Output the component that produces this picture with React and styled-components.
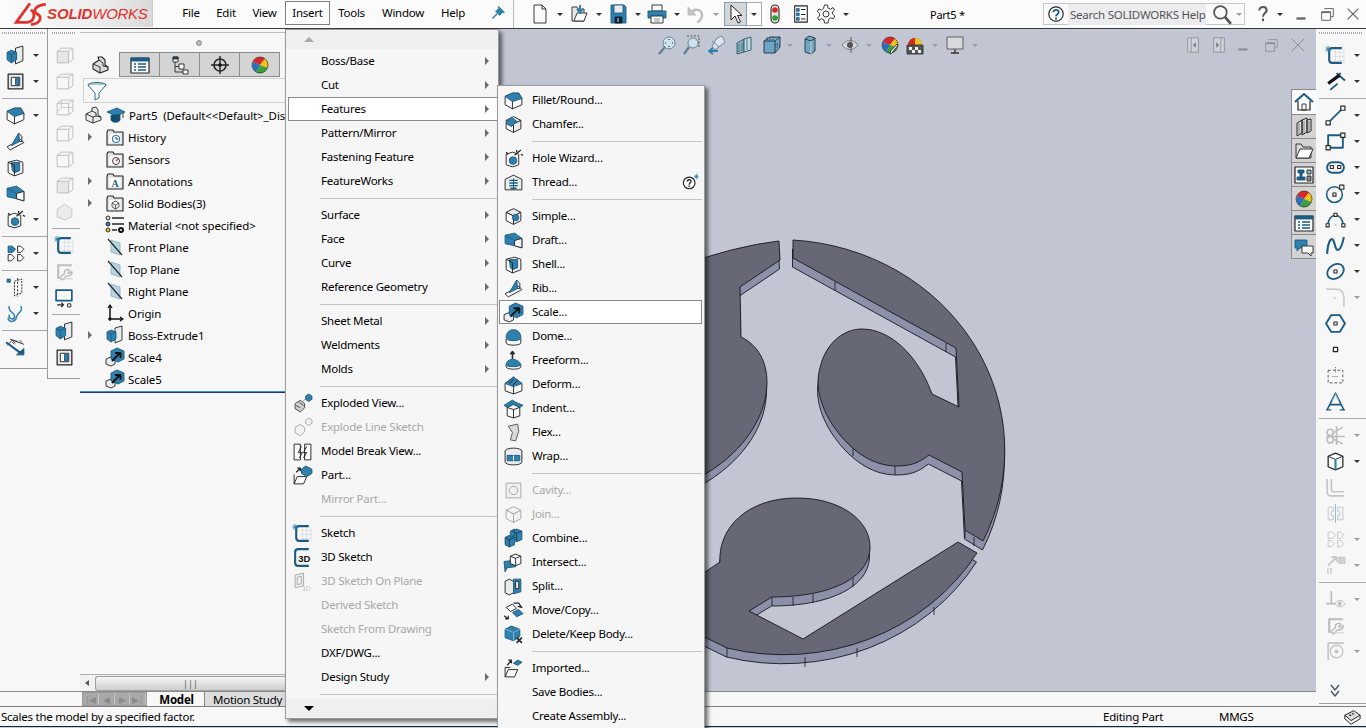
import React from 'react'
import styled, { createGlobalStyle } from 'styled-components'

const B = '#2f80ad'
const D = '#1c5c84'
const L = '#e9ebec'
const W = '#fbfbfb'
const K = '#262626'

const GlobalStyle = createGlobalStyle`
  html, body { margin: 0; padding: 0; background: #f7f7f7; overflow: hidden; }
  body { font-family: 'Noto Sans', 'Open Sans', sans-serif; font-size: 11.5px; letter-spacing: -0.25px; color: #000; }
`

const Box = ({ t = L, l = W, r = L }) => (
  <>
    <path d="M3 6 10 2.5 17 6 10 9.5Z" fill={t} />
    <path d="M3 6 10 9.5V17.5L3 14Z" fill={l} />
    <path d="M17 6 10 9.5V17.5L17 14Z" fill={r} />
  </>
)

const Ball = () => (
  <>
    <path d="M10 10 3 7A8 8 0 0 1 15 3.5Z" fill="#d8262c" stroke="none" />
    <path d="M10 10 15 3.5A8 8 0 0 1 17.6 13Z" fill="#f2c21c" stroke="none" />
    <path d="M10 10 17.6 13A8 8 0 0 1 6 17Z" fill="#3aa23c" stroke="none" />
    <path d="M10 10 6 17A8 8 0 0 1 3 7Z" fill="#2a6fc0" stroke="none" />
    <circle cx="10" cy="10" r="8" strokeWidth=".6" />
  </>
)

const Folder = ({ children }) => (
  <>
    <path d="M2 5V18H18V5H9L8 3H3Z" fill="#e4e4e4" strokeWidth="1.1" />
    <rect x="4.5" y="7" width="11" height="9" fill="#fdfdfd" stroke="none" />
    {children}
  </>
)

const Plane = () => (
  <>
    <path d="M6 3 15 6V18L6 15Z" fill="#b7d3e0" stroke="#8fb6c8" />
    <path d="M3 2 17 18" strokeWidth="1.2" />
  </>
)

const Scale = () => (
  <>
    <path d="M1 12 6 10 10 12V17L6 19 1 17Z" fill={L} />
    <path d="M6 4 12 1 19 4V12L13 15 6 12Z" fill={B} stroke={D} />
    <path d="M7 14 15 6M10 6H15.500V11" stroke="#111" strokeWidth="1.800" />
  </>
)

const Wire = ({ fill = 'none' }) => (
  <g stroke="#bcbcbc">
    <path d="M3 6H14V17H3Z" fill={fill} />
    <path d="M3 6 7 3H18V14L14 17M14 6 18 3" fill="none" />
  </g>
)

const Grid = () => (
  <path d="M8 7H19M8 11H19M8 15H19M10 4V18M14 4V18M18 4V18" stroke="#d5dade" strokeWidth=".7" />
)

const ICONS = {
  extrude: <><path d="M10 3 17 1V15L10 18Z" fill={L} /><path d="M2 7 6 5 11 7V14L6 17 2 14Z" fill={B} stroke={D} /><path d="M2 7 6 9 11 7M6 9V17" stroke={D} /></>,
  cut: <><path d="M3 3H17V17H3Z" fill={L} strokeWidth="1.2" /><path d="M6 6H14V14H6Z" fill={W} /><path d="M10 7H13V13H10Z" fill={B} stroke={D} /></>,
  fillet: <><path d="M2 6 9 3 15 3 18 8V14L9 18 2 14Z" fill={W} /><path d="M2 6 9 3 15 3 18 8 9 11 2 6Z" fill={B} stroke={D} /><path d="M9 11V18" /></>,
  chamfer: <><Box /><path d="M3 9 8 3 13 7 8 12Z" fill={B} stroke={D} /></>,
  hole: <><path d="M3 6 9 4 15 6V16L9 18 3 16Z" fill={W} /><circle cx="9.5" cy="12" r="3.6" fill={B} stroke={D} /><path d="M11 7 17 2M3 4 5 6M13 2V4M17 6 19 7" strokeWidth="1.2" /></>,
  thread: <><path d="M2 7 10 3 18 7V17H2Z" fill={L} /><path d="M6 8H14M6 10.5H14M6 13H14M7 15.5H13" stroke={D} strokeWidth="1.3" /><path d="M10 6V17" stroke={D} /></>,
  simple: <><Box /><circle cx="12" cy="11" r="3" fill={B} stroke={D} /></>,
  draft: <><path d="M2 5 11 3 18 8V17L11 15 2 13Z" fill={B} stroke={D} /><path d="M11 15V10L18 8V17Z" fill={W} /><path d="M11 10 2 5" stroke={D} /></>,
  shell: <><path d="M3 5 11 3 17 5V15L9 18 3 15Z" fill={W} /><path d="M6 5.5 14 5V13L9 15 7 13Z" fill={B} stroke={D} /><path d="M3 5 9 8V18" /></>,
  rib: <><path d="M2 15 15 8 18 11 5 18Z" fill={W} /><path d="M6 14 13 2 14 10Z" fill={B} stroke={D} /><path d="M13 2 16 5V10L14 10" /></>,
  scale: <Scale />,
  dome: <><path d="M3 12V16C3 19 17 19 17 16V12" fill={W} /><path d="M3 11C3 1 17 1 17 11 17 15 3 15 3 11Z" fill={B} stroke={D} /></>,
  freeform: <><path d="M3 14V16C3 19 17 19 17 16V14" fill={W} /><path d="M3 14C4 9 7 10 9 8 12 10 16 10 17 14 16 16 4 17 3 14Z" fill={B} stroke={D} /><path d="M9 8V2M7 4 9 1.5 11 4" strokeWidth="1.5" /></>,
  deform: <><path d="M2 9 10 3 18 9V16L10 19 2 16Z" fill={W} /><path d="M2 9 10 3 18 9 10 12Z" fill={B} stroke={D} /><path d="M6 9 10 5M9 11 14 6M10 12V19" stroke={K} /></>,
  indent: <><path d="M4 9 10 6 16 9V17L10 19 4 17Z" fill={W} /><path d="M1 7 9 2 12 4 19 7 16 9 10 6 4 9Z" fill={B} stroke={D} /><path d="M10 11V19M4 9 10 11 16 9" /></>,
  flex: <path d="M5 4 14 2 15 9 12 18 7 17 9 10Z" fill="#d9dbdc" stroke="#555" />,
  wrap: <><ellipse cx="10" cy="5" rx="8" ry="3" fill={L} /><path d="M2 5V15C2 19 18 19 18 15V5" fill={L} /><path d="M4 9H16V14H4Z" fill={B} stroke={D} /><path d="M10 9V14" stroke={W} /></>,
  cavity: <><path d="M3 3H17V17H3Z" fill={L} /><circle cx="10" cy="10" r="4" /></>,
  join: <Box />,
  combine: <><path d="M9 3 13 1 18 3V11L13 13 9 11Z" fill={B} stroke={D} /><path d="M2 9 6 7 11 9V16L6 18 2 16Z" fill={B} stroke={D} /><path d="M7 3 11 1V7L7 9Z" fill={B} stroke={D} /><path d="M13 13V5L9 3M13 5 18 3M6 18V11L2 9M6 11 11 9" stroke={K} strokeWidth=".7" /></>,
  intersect: <><path d="M1 9 12 8V14L4 15 2 19Z" fill={B} stroke={D} /><path d="M7 4 12 2 17 4V11L12 13 7 11Z" fill={W} /><path d="M7 4 12 6 17 4M12 6V13" /></>,
  split: <><path d="M2 5 6 3 10 5V16L6 18 2 16Z" fill={L} /><path d="M10 3 17 3V15L10 17Z" fill={B} stroke={D} /><path d="M12 5H15V12H12Z" fill={L} stroke={K} /></>,
  move: <><path d="M3 7 9 4 13 8 7 11Z" fill={W} /><path d="M9 12 15 9 19 13 13 16Z" fill={B} stroke={D} /><path d="M10 3H15L17 6M16 5 18 7 14 6M1 15 5 18M2 18 5 18 5 15" strokeWidth="1.2" /></>,
  deleteBody: <><path d="M2 5 8 2 16 5V12L10 16 2 13Z" fill={B} stroke={D} /><path d="M2 5 10 8 16 5M10 8V16" stroke="#7fb4d0" /><path d="M13 13 18 18M18 13 13 18" strokeWidth="1.6" /></>,
  imported: <><path d="M2 9V18H11L14 11H5L2 18" fill={W} /><path d="M2 9H7" /><path d="M4 7 8 2M5 2H8V5" strokeWidth="1.3" /><path d="M10 5 14 2 18 4 14 7Z" fill={B} stroke={D} /></>,
  part: <><path d="M2 9V18H11L14 11H5L2 18" fill={W} /><path d="M4 7 8 3M5 3H8V6" strokeWidth="1.3" /><path d="M9 4 13 1 19 4V8L14 11 9 8Z" fill={B} stroke={D} /></>,
  explode: <><path d="M3 10 8 7 12 10V14L8 18 3 15Z" fill="#d2d2d2" stroke="#444" /><path d="M4 12 8 14M7 9 11 12" stroke="#444" /><path d="M13 3 16 1 19 3V6L16 8 13 6Z" fill={B} stroke={D} /><path d="M11 7 13 6" strokeDasharray="1 1" /></>,
  explodeLine: <><path d="M3 10 8 7 12 10V14L8 18 3 15Z" fill={L} /><path d="M13 3 16 1 19 3V6L16 8 13 6Z" fill={L} /></>,
  breakView: <><path d="M2 3H8V18H2ZM12 3H18V18H12Z" fill={W} /><path d="M9 5 6 11H10L7 16M14 5 11 11H14L11 16" strokeWidth=".9" /></>,
  sketch: <><Grid /><path d="M16 3H7Q4 3 4 6V14Q4 17 7 17H16" stroke={D} strokeWidth="2" /><path d="M1 2 5 6M5 2 1 6M3 1V7M0.5 4H5.5" stroke={B} /></>,
  sketch3d: <><path d="M16 2H6Q3 2 3 5V15Q3 18 6 18H16" stroke={D} strokeWidth="2" /><text x="6" y="14" fontFamily="'Liberation Sans'" fontWeight="700" fontSize="9" letterSpacing="0" fill="#111" stroke="none">3D</text></>,
  sketchPlane: <><path d="M3 4 11 2V14L3 16Z" fill={L} /><path d="M5 6 9 5V12L5 13Z" /><text x="9" y="19" fontFamily="'Liberation Sans'" fontSize="7" letterSpacing="0" fill="#777" stroke="none">3D</text></>,
  helpStar: <><circle cx="8" cy="11" r="6.5" strokeWidth="1.3" fill={W} /><path d="M5.8 9.5C6 6.5 11 7 10 9.8 9.5 11 8 11 8 13" strokeWidth="1.5" /><path d="M8 14V15.5" strokeWidth="1.5" /><path d="M14 2 18 6M18 2 14 6M16 1V7M13.5 4H18.5" stroke={B} /></>,

  pattern: <><path d="M3 3H7L10 6 7 9H3Z" fill={B} stroke={D} /><path d="M12 3H15L18 6 15 9H12ZM3 11H6L9 14 6 17H3ZM12 11H15L18 14 15 17H12Z" fill={W} /></>,
  refGeom: <><path d="M9 4 16 2V15L9 18Z" fill={W} strokeDasharray="2 1" /><path d="M12 1V19" strokeDasharray="2 1.5" /><path d="M2 2H5V5H2Z" fill={B} stroke={D} /></>,
  curve: <path d="M4 3C3 9 8 8 9 12 10 17 3 16 4 11M15 3C18 8 12 9 11 13 10 19 3 19 3 14" stroke={B} strokeWidth="1.5" />,
  measure: <><path d="M2 8 7 3 10 6M7 5 9 7M10 3 12 5M14 3 16 5M5 2 18 7" strokeWidth=".9" /><path d="M1 5 16 16" stroke={D} strokeWidth="2" /><path d="M11 17H18V11Z" fill={D} stroke={D} /></>,
  wire1: <Wire fill="#e6e6e6" />,
  wire2: <Wire />,
  wire3: <><Wire /><path d="M3 14 7 10M7 3V10H18" stroke="#c9c9c9" /></>,
  wire4: <path d="M3 8 10 3 17 8V15L10 18 3 15Z" fill="#ececec" stroke="#c4c4c4" />,
  sketchFix: <><path d="M3 3H17V5H5V17H3Z" fill="#bcbcbc" stroke="none" /><path d="M5 16 10 12C9 8 14 7 15 9L13 11 15 12 17 10C18 13 15 15 12 14L8 18Z" fill="none" stroke="#bcbcbc" strokeWidth="1.3" /><path d="M6 17H18" stroke="#ccc" /></>,
  rectMove: <><path d="M2 3H17V13H2Z" stroke={D} strokeWidth="1.6" /><path d="M3 17H9M7 15 9 17 7 19" strokeWidth="1.2" /><path d="M13 16H16V19H13Z" fill={W} /></>,

  partNode: <><path d="M3 9 9 6V3L13 2 15 5V10L18 12V15L10 18 3 15Z" fill={L} /><path d="M9 6 13 8V11L18 12M3 9 10 12V18M10 12 13 11" /></>,
  cap: <><path d="M1 7 11 3 19 7 10 11Z" fill={B} stroke={D} /><path d="M5 10V15C6 18 13 18 14 15V9" fill="#124d70" stroke={D} /><path d="M17 8V13" /></>,
  history: <Folder><circle cx="11" cy="12" r="3.5" fill={W} stroke={B} strokeWidth="1.2" /><path d="M11 10V12H13" stroke={K} /></Folder>,
  sensors: <Folder><circle cx="11" cy="12" r="3.5" fill={W} /><path d="M11 12 13 10" stroke="#c33" strokeWidth="1.2" /></Folder>,
  annotations: <Folder><text x="6.5" y="16" fontFamily="'Liberation Serif'" fontWeight="700" fontSize="10" letterSpacing="0" fill={D} stroke="none">A</text></Folder>,
  bodies: <Folder><path d="M7 10 10.500 8 14 10V14L10.500 16 7 14ZM7 10 10.500 12 14 10M10.500 12V16" fill={L} strokeWidth=".7" /></Folder>,
  material: <><circle cx="3" cy="3" r="2" fill="#d8d8d8" /><circle cx="3" cy="9" r="2" fill={B} /><circle cx="3" cy="15" r="2" fill="#e8c21c" /><path d="M7 3H19M7 9H19M7 15H12" strokeWidth="1.6" /><circle cx="16" cy="15" r="3" fill="#111" stroke="none" /><circle cx="16" cy="15" r="1" fill={W} stroke="none" /></>,
  plane: <Plane />,
  origin: <><path d="M5 2V16H18" stroke="#111" strokeWidth="1.5" /><path d="M3 5 5 2 7 5M15 14 18 16 15 18" stroke="#111" strokeWidth="1.3" /><circle cx="5" cy="16" r="1.4" fill="#111" /></>,

  tabTree: <><path d="M3 9 9 5 8 2 12 2 15 5V10L18 12V15L10 18 3 14Z" fill="#dadada" strokeWidth="1.1" /><path d="M9 5 13 8V11L18 12M3 9 10 12V18" /></>,
  tabProps: <><path d="M1 3H19V18H1Z" fill={W} strokeWidth="1.2" /><path d="M1 3H19V6H1Z" fill={D} stroke={D} /><path d="M4 9H6M8 9H16M4 12H6M8 12H16M4 15H6M8 15H16" stroke={D} strokeWidth="1.3" /></>,
  tabConfig: <><path d="M3 2H8V7H3ZM9 9H14V14H9ZM13 15H18V19H13Z" fill={W} /><path d="M3 2H8V4H3Z" fill={D} /><path d="M5 7V17H13M5 11.500H9" /></>,
  tabTarget: <><circle cx="10" cy="10" r="6" strokeWidth="1.6" /><path d="M10 1V19M1 10H19" strokeWidth="1.4" /><circle cx="10" cy="10" r="1.5" fill="#111" /></>,
  ball: <Ball />,
  funnel: <><ellipse cx="10" cy="4" rx="9" ry="2.500" fill="#a5cfe0" stroke={D} /><path d="M1 4 8 12V19L12 17V12L19 4" fill={W} stroke={D} /></>,

  newDoc: <path d="M4 1H12L16 5V19H4ZM12 1V5H16" fill={W} />,
  open: <><path d="M3 3H8L9 5H15V17H3Z" fill="#e8e8e8" /><path d="M5 17 8 9H18L15 17Z" fill={W} /><path d="M11 1V7M8 5 11 9 14 5" stroke={B} strokeWidth="2" /></>,
  save: <><path d="M3 1H16L18 3V19H3Z" fill={B} stroke={D} /><path d="M6 1H15V9H6Z" fill={L} stroke={D} /><path d="M7 13H14V19H7Z" fill="#123" stroke="#123" /><path d="M10 14V18" stroke={W} /></>,
  print: <><path d="M5 1H15V7H5Z" fill={W} /><path d="M1 7H19V14H1Z" fill={B} stroke={D} /><path d="M4 12H16V19H4Z" fill={W} /><path d="M7 15H13M7 17H13" stroke="#888" /></>,
  undo: <><path d="M5 9C8 4 16 5 16 11 16 15 13 18 11 18" stroke="#bdbdbd" strokeWidth="2.500" /><path d="M2 3V11H10Z" fill="#c4c4c4" stroke="#bdbdbd" /></>,
  cursor: <path d="M5 1V16L9 12 12 19 14.500 18 11.500 11.500H16Z" fill={W} strokeWidth="1" />,
  light: <><rect x="6" y="1" width="8" height="18" rx="4" fill="#e8e8e8" strokeWidth="1.1" /><circle cx="10" cy="6" r="2.800" fill="#d8261c" stroke="none" /><circle cx="10" cy="14" r="2.800" fill="#2ca02c" stroke="none" /></>,
  listDoc: <><path d="M3 1H17V19H3Z" fill={W} strokeWidth="1.2" /><path d="M5 4H8V7H5ZM5 9H8V12H5ZM5 14H8V17H5Z" fill={B} stroke={D} /><path d="M10 5H15M10 10.500H15M10 15.500H15" strokeWidth="1.2" /></>,
  gear: <><path d="M8.500 1H11.500L12 4 14.500 5.200 17 3.500 18.500 6 16.300 8 16.500 10 18.800 12 17.300 14.700 14.500 13.800 12.500 15.500 12 19H8.500L8 16 5.500 14.700 3 16.300 1.500 13.700 3.700 12 3.500 9.500 1.300 7.500 2.800 5 5.500 6 7.500 4.500Z" /><circle cx="10" cy="10" r="3" /></>,
  helpCircle: <><circle cx="10" cy="10" r="8" fill={W} strokeWidth="1.3" /><path d="M7 8C7 4.500 13 4.800 13 8 13 10.500 10 10 10 12.500" stroke={D} strokeWidth="2" /><path d="M10 14V16" stroke={D} strokeWidth="2" /></>,
  search: <><circle cx="8" cy="8" r="6" stroke="#555" strokeWidth="1.700" /><path d="M12.500 12.500 18 19" stroke="#555" strokeWidth="2.600" /></>,
  questionMark: <><path d="M6 6C6 1 14 1 14 6 14 9 10 9 10 13" stroke="#555" strokeWidth="2.300" /><path d="M10 15V18" stroke="#555" strokeWidth="2.300" /></>,
  pin: <><path d="M7 8 12 3 17 8 12 13Z" fill={B} stroke={B} /><path d="M10 2 18 10M9 11 3 17" stroke={B} strokeWidth="1.800" /></>,
  minimize: <path d="M5 15H15" stroke="#666" strokeWidth="2.600" />,
  restore: <><path d="M7 4H17V13H14" stroke="#666" strokeWidth="1.100" /><path d="M4 8H14V17H4Z" stroke="#666" strokeWidth="1.100" /><path d="M4 8H14" stroke="#666" strokeWidth="2" /></>,
  close: <path d="M4 4 16 16M16 4 4 16" stroke="#666" strokeWidth="1.400" />,
  minimizeSoft: <path d="M5 15H15" stroke="#8a8d96" strokeWidth="2.400" />,
  restoreSoft: <><path d="M7 4H17V13H14M4 8H14V17H4Z" stroke="#8a8d96" /><path d="M4 8H14" stroke="#8a8d96" strokeWidth="2" /></>,
  closeSoft: <path d="M3 3 17 17M17 3 3 17" stroke="#8a8d96" strokeWidth="1.100" />,
  panelLeft: <><path d="M4 2H16V18H4Z" fill="#cfd2da" stroke="#8a8d96" /><path d="M8 2V18" stroke="#8a8d96" /><path d="M13 7 10 10 13 13Z" fill="#70737c" stroke="none" /></>,
  panelRight: <><path d="M4 2H16V18H4Z" fill="#cfd2da" stroke="#8a8d96" /><path d="M12 2V18" stroke="#8a8d96" /><path d="M7 7 10 10 7 13Z" fill="#70737c" stroke="none" /></>,

  zoomFit: <><circle cx="12" cy="8" r="6" fill="#cfe2ec" stroke="#5d7f92" /><path d="M8 12 2 19" stroke="#5d7f92" strokeWidth="2.200" /><path d="M12 4V5M12 11V12M8 8H9M15 8H16" stroke="#333" strokeWidth="1.200" /></>,
  zoomArea: <><circle cx="11" cy="8" r="5" fill="#cfe2ec" stroke="#5d7f92" /><path d="M7 12 2 19" stroke="#5d7f92" strokeWidth="2.200" /><path d="M5 1H17V13" stroke="#444" strokeDasharray="2 1.500" /></>,
  zoomPrev: <><path d="M10 3 15 1 18 7 8 15 5 11Z" fill="#dfe4e8" stroke="#5d7f92" /><path d="M5 6 12 12" stroke="#5d7f92" /><path d="M2 16H11M6 13 2 16 6 19" stroke={B} strokeWidth="2" /></>,
  section: <><path d="M3 8 10 4V17L3 19Z" fill="#86b4cc" stroke="#355" /><path d="M10 4 17 2V15L10 17Z" fill="#bdd7e4" stroke="#355" /><path d="M5 9V17M8 8V16M13 4V15" stroke="#355" strokeWidth=".7" /></>,
  orient: <><path d="M2 6 8 2H18V12L13 18H2Z" fill="#6ea6c4" stroke="#234" /><path d="M2 6H13V18M13 6 18 2" stroke="#234" /><path d="M8 2V6M5 2V5M11 2V6M13 10H18M15 8V14" stroke="#234" strokeDasharray="1 1" /></>,
  display: <><path d="M5 4 9 1 15 3V16L11 19 5 17Z" fill="#6ea6c4" stroke="#234" /><path d="M5 4 11 6V19M11 6 15 3" stroke="#234" /><path d="M11 6V19" stroke="#d6e6ee" strokeWidth="1.200" /></>,
  eye: <><path d="M2 10C6 4 14 4 18 10 14 16 6 16 2 10Z" fill="#d4d6da" stroke="#787a80" /><circle cx="10" cy="10" r="3" fill="#555" stroke="none" /><path d="M11 2V18" stroke="#555" /></>,
  paint: <><Ball /><path d="M18 10 12 18 10 19 10.500 16 17 9Z" fill={W} stroke={K} /></>,
  scene: <><path d="M3 10A7 7 0 1 1 17 10Z" fill="#3aa23c" stroke="none" /><path d="M3 10A7 7 0 0 1 10 3V10Z" fill="#d8261c" stroke="none" /><path d="M10 3A7 7 0 0 1 17 10H10Z" fill="#f2c21c" stroke="none" /><path d="M2 10H18V19H2Z" fill="#555" stroke="#333" /><path d="M4 12H7V15H4ZM10 12H13V15H10ZM7 15H10V18H7ZM13 15H16V18H13Z" fill="#eee" stroke="none" /></>,
  monitor: <><path d="M2 2H18V14H2Z" fill="#d7d9dd" stroke="#555" /><path d="M10 14V18M6 18H14" stroke="#555" strokeWidth="1.800" /></>,

  smartDim: <><path d="M15 2 5 10" stroke={D} strokeWidth="1.800" /><path d="M5 18 12 12M11 2 19 9" stroke={D} strokeWidth="1.800" /><path d="M3 12 14 4" stroke="#111" strokeWidth="3" /></>,
  line: <><path d="M3 17 17 3" stroke={D} strokeWidth="1.700" /><path d="M1 15H5V19H1ZM15 1H19V5H15Z" fill={W} strokeWidth="1.100" /></>,
  rect: <><path d="M3 4H17V16H3Z" stroke={D} strokeWidth="1.800" /><path d="M15 2H19V6H15ZM1 14H5V18H1Z" fill={W} strokeWidth="1.100" /></>,
  slot: <><rect x="2" y="5" width="16" height="10" rx="5" stroke={D} strokeWidth="1.800" /><path d="M5 8H8V11H5ZM12 8H15V11H12Z" strokeWidth="1" /></>,
  circle: <><circle cx="9" cy="11" r="7.500" stroke={D} strokeWidth="1.500" /><path d="M7.500 9.500H10.500V12.500H7.500Z" strokeWidth="1" /><path d="M14 2H18V6H14Z" fill={W} strokeWidth="1" /></>,
  arc: <><path d="M3 15C3 3 17 3 17 15" stroke={D} strokeWidth="1.500" /><path d="M1 14H4V17H1ZM8.500 4H11.500V7H8.500ZM16 14H19V17H16Z" fill={W} strokeWidth="1" /><path d="M9 14 11 16M11 14 9 16" stroke="#bbb" /></>,
  spline: <path d="M2 18C3 4 7 0 9 8 11 18 15 16 18 2" stroke={D} strokeWidth="2" />,
  ellipse: <><ellipse cx="10" cy="10" rx="8.500" ry="6.500" transform="rotate(-35 10 10)" stroke={D} strokeWidth="1.700" /><path d="M8.500 8.500H11.500V11.500H8.500Z" strokeWidth="1" /></>,
  sfillet: <><path d="M1 2H10C15 2 18 5 18 10V19" stroke="#cfcfcf" strokeWidth="1.700" /><path d="M8 9 11 12M11 9 8 12" stroke="#d8d8d8" /></>,
  polygon: <><path d="M6 2H14L19 10 14 18H6L1 10Z" stroke={D} strokeWidth="1.800" /><path d="M8.500 8.500H11.500V11.500H8.500Z" strokeWidth="1" /></>,
  point: <path d="M8 8H12V12H8Z" strokeWidth="1.200" />,
  construction: <><path d="M3 5H17V17H3Z" strokeDasharray="2.500 2" stroke="#555" /><path d="M10 2V8M7 11H13" stroke="#666" strokeDasharray="1 1" /></>,
  textA: <><path d="M2 18 10 2 18 18M5 13H15" stroke={D} strokeWidth="1.500" /><path d="M7 9 10 3 13 9" stroke="#8cb8ce" strokeWidth="1" /><path d="M1 18H6M14 18H19" stroke={D} strokeWidth="1.200" /></>,
  trim: <g stroke="#bdbdbd"><circle cx="5" cy="7" r="3" strokeWidth="1.500" /><circle cx="5" cy="14" r="3" strokeWidth="1.500" /><path d="M7 8 17 2M7 13 17 18M11 1V19M1 11H19" strokeWidth="1.500" /></g>,
  convert: <><path d="M3 5 10 2 17 5V15L10 18 3 15Z" fill={W} strokeWidth="1.200" /><path d="M3 5 10 8 17 5M10 8V14" /><path d="M10 8V18" stroke={B} strokeWidth="2" /></>,
  offset: <g stroke="#c4c4c4" strokeWidth="1.500"><path d="M2 2V14C2 17 3 18 6 18H18" /><path d="M6 2V11C6 14 7 14 9 14H18" /></g>,
  mirror: <g stroke="#c4c4c4"><path d="M10 1V19" stroke="#8fb6c8" /><path d="M3 4H8V8H6V12H8V16H3ZM17 4H12V8H14V12H12V16H17Z" /></g>,
  spattern: <g stroke="#c4c4c4"><path d="M3 3H7L10 6 7 9H3ZM12 3H15L18 6 15 9H12ZM3 11H6L9 14 6 17H3ZM12 11H15L18 14 15 17H12Z" /></g>,
  moveEnt: <g stroke="#c4c4c4"><path d="M3 10 11 2M6 2H11V7" strokeWidth="1.600" /><path d="M13 2H19V8H13Z" fill="#d2d2d2" /><path d="M2 13H8M2 15H8M2 17H8" strokeDasharray="1.500 1.500" strokeWidth="1.400" /></g>,
  displayRel: <g stroke="#bcbcbc"><path d="M6 2V14M1 14H10" strokeWidth="1.600" /><path d="M9 14C12 10 17 10 19 14 17 18 12 18 9 14Z" /><circle cx="14" cy="14" r="1.600" fill="#bcbcbc" /></g>,
  plane3: <g stroke="#c4c4c4"><path d="M3 2H18M3 2V18" strokeWidth="1.500" /><circle cx="11" cy="10" r="6" strokeWidth="1.300" /><circle cx="11" cy="10" r="1.500" fill="#c4c4c4" /></g>,
  chevrons: <path d="M6 3 10 8 14 3M6 9 10 14 14 9" stroke="#44566a" strokeWidth="1.400" />,

  home: <><path d="M1 10 10 2 19 10" stroke={D} strokeWidth="2" /><path d="M4 9V18H16V9" fill={W} strokeWidth="1.200" /><path d="M8 12H12V18H8Z" /></>,
  library: <><path d="M3 6 8 3V16L3 19ZM8 3 13 1V15L8 18ZM13 3 17 2V14L13 16Z" fill="#dfdfdf" strokeWidth="1" /><path d="M5 6V17M10 4V16M15 4V14" stroke="#777" /></>,
  folder: <><path d="M2 3H7L9 6H17V17H2Z" fill="#d8d8d8" /><path d="M2 17 6 8H19L15 17Z" fill={W} /></>,
  palette: <><path d="M1 2H19V18H1Z" fill={W} strokeWidth="1.200" /><path d="M4 5H10V8H8V12H6V8H4ZM6 12H11V15H3V12Z" fill={D} stroke={D} /><path d="M13 5H17V9H13Z" fill="#8fb6c8" /><path d="M13 11H17V16H13Z" fill="#888" /></>,
  forum: <><path d="M1 3H13V11H6L3 14V11H1Z" fill={B} stroke={D} /><path d="M8 9H19V16H17V19L14 16H8Z" fill={W} /></>,
  statusGear: <><path d="M2 8 12 3 19 8 9 14Z" fill="#ddd" strokeWidth="1.100" /><path d="M2 8V12L9 18 19 12V8" strokeWidth="1.100" /><path d="M7 8H9M10 6.500H12" strokeWidth="1.500" /></>,
}

const IconSvg = styled.svg`
  display: block;
  flex: none;
  width: ${({ $size }) => $size || 20}px;
  height: ${({ $size }) => $size || 20}px;
  opacity: ${({ $faded }) => ($faded ? 0.38 : 1)};
  filter: ${({ $faded }) => ($faded ? 'grayscale(1)' : 'none')};
`

const Icon = ({ name, size, faded }) => (
  <IconSvg
    viewBox="0 0 20 20"
    fill="none"
    stroke={K}
    strokeWidth=".9"
    strokeLinejoin="round"
    $size={size}
    $faded={faded}
  >
    {ICONS[name]}
  </IconSvg>
)

const Window = styled.div`
  position: relative;
  width: 1366px;
  height: 728px;
  display: flex;
  flex-direction: column;
  overflow: hidden;
  background: #f7f7f7;
`

/* top bar */
const TopBar = styled.header`
  height: 28px;
  flex: none;
  display: flex;
  align-items: stretch;
  background: #fbfbfb;
  border-bottom: 1px solid #3a3a3a;
`

const Logo = styled.div`
  width: 143px;
  margin-left: 10px;
  height: 27px;
  flex: none;
  display: flex;
  align-items: center;
  padding-left: 3px;
  box-sizing: border-box;
  background: linear-gradient(90deg, #fafafa 0%, #eeeeee 60%, #d9d9d9 100%);
  border-right: 1px solid #ccc;
  color: #e0322c;
  font-family: 'Liberation Sans', Arial, sans-serif;
  font-size: 15px;
  font-style: italic;
  line-height: 1;
  letter-spacing: -0.1px;
`

const LogoBold = styled.b`
  font-weight: 700;
  margin-left: -2px;
`

const LogoThin = styled.span`
  letter-spacing: -0.3px;
`

const MenuBar = styled.nav`
  display: flex;
  margin-left: 21px;
  width: 339px;
  flex: none;
  align-items: flex-start;
  padding-top: 1px;
  box-sizing: border-box;
`

const MenuTitle = styled.div`
  height: 24px;
  width: ${({ $w }) => $w}px;
  flex: none;
  display: flex;
  align-items: center;
  justify-content: center;
  padding-bottom: 1px;
  box-sizing: border-box;
  border: 1px solid ${({ $open }) => ($open ? '#808080' : 'transparent')};
  background: ${({ $open }) => ($open ? '#fff' : 'transparent')};
`

const PinSlot = styled.div`
  width: 0;
  margin-left: auto;
  flex: none;
  position: relative;
  left: -23px;
  top: 4px;
`

const Toolbar = styled.div`
  flex: 1;
  display: flex;
  align-items: center;
  border-left: 1px solid #bdbdbd;
  padding-left: 13px;
  min-width: 0;
`

const ToolCell = styled.div`
  width: 39px;
  height: 24px;
  flex: none;
  display: grid;
  grid-template-columns: 26px 1fr;
  justify-items: center;
  align-items: center;
`

const CaretSlot = styled.div`
  width: 20px;
  flex: none;
  padding-left: 4px;
  box-sizing: border-box;
`

const Caret = styled.span`
  display: block;
  width: 0;
  height: 0;
  border-left: 3px solid transparent;
  border-right: 3px solid transparent;
  border-top: 3px solid ${({ $soft }) => ($soft ? '#9a9da6' : '#333')};
`

const SelectedTool = styled.div`
  margin-left: 2px;
  width: 23px;
  height: 24px;
  flex: none;
  display: flex;
  align-items: center;
  justify-content: center;
  background: #d6d6d6;
  border: 1px solid #7ea3bd;
  box-sizing: border-box;
`

const SelectedCaret = styled.div`
  width: 15px;
  height: 24px;
  flex: none;
  display: flex;
  align-items: center;
  justify-content: center;
  background: #fdfdfd;
  border: 1px solid #a9a9a9;
  border-left: none;
  box-sizing: border-box;
`

const ToolIcon = styled.div`
  width: 26px;
  flex: none;
  display: flex;
  justify-content: center;
  margin-left: ${({ $ml }) => $ml || 0}px;
`

const DocTitle = styled.div`
  margin-left: 71px;
  width: 41px;
  flex: none;
  white-space: nowrap;
  font-size: 11px;
`

const SearchBox = styled.div`
  margin-left: 72px;
  width: 202px;
  height: 22px;
  flex: none;
  display: flex;
  align-items: center;
  box-sizing: border-box;
  padding-left: 3px;
  background: #fafafa;
  border: 1px solid #c8c8c8;
`

const SearchText = styled.span`
  margin-left: 3px;
  padding: 3px 2px;
  width: 138px;
  flex: none;
  background: #ececef;
  color: #555;
  font-size: 11.5px;
  white-space: nowrap;
  box-sizing: border-box;
`

const SearchEnd = styled.div`
  display: flex;
  align-items: center;
  gap: 3px;
  margin-left: 6px;
`

const WinControls = styled.div`
  display: flex;
  align-items: center;
  margin-left: 5px;
  flex: none;
`

const WinButton = styled.div`
  width: 26px;
  display: flex;
  justify-content: center;
`

const WinCaret = styled.div`
  margin: 0 5px 0 1px;
`

/* main area */
const Body = styled.div`
  height: 678px;
  flex: none;
  display: flex;
`

const Workspace = styled.div`
  width: 1316px;
  flex: none;
  display: flex;
  flex-direction: column;
`

const Main = styled.div`
  height: 662px;
  flex: none;
  display: flex;
  min-height: 0;
`

const LeftDock = styled.aside`
  width: 285px;
  flex: none;
  display: flex;
  align-items: flex-start;
  background: #f7f7f7;
`

const Grip = styled.div`
  height: 13px;
  flex: none;
  box-sizing: border-box;
  padding-top: 3px;
  &::before {
    content: '';
    display: block;
    height: 2px;
    margin: 0 ${({ $inset }) => $inset || 2}px;
    background-image: repeating-linear-gradient(90deg, #a8a8a8 0 1px, transparent 1px 2px);
  }
`

const DockColumn = styled.div`
  width: ${({ $w }) => $w}px;
  flex: none;
  box-sizing: border-box;
  padding-bottom: 8px;
  border-bottom: 1px solid #9a9a9a;
  border-left: ${({ $lined }) => ($lined ? '1px solid #9a9a9a' : 'none')};
`

const DockRow = styled.div`
  height: 26px;
  flex: none;
  display: grid;
  grid-template-columns: ${({ $cols }) => $cols};
  justify-items: center;
  align-items: center;
`

const DockSep = styled.div`
  height: 8px;
  flex: none;
  display: flex;
  align-items: center;
  &::before {
    content: '';
    flex: 1;
    height: 1px;
    margin: ${({ $m }) => $m || '0 3px'};
    background: #a8a8a8;
  }
`

const FeaturePanel = styled.section`
  width: 205px;
  flex: none;
  height: calc(100% - 3px);
  display: flex;
  flex-direction: column;
  border-top: 1px solid #bdbdbd;
  margin-top: 3px;
  box-sizing: border-box;
`

const PanelGrip = styled.div`
  height: 19px;
  flex: none;
  display: flex;
  align-items: center;
  justify-content: center;
  padding-left: 32px;
  box-sizing: border-box;
`

const GripDot = styled.span`
  display: block;
  width: 6px;
  height: 6px;
  border-radius: 50%;
  background: #bdbdbd;
  border: 1px solid #8e8e8e;
  box-sizing: border-box;
`

const PanelTabs = styled.div`
  display: flex;
  height: 26px;
  flex: none;
`

const PanelTab = styled.div`
  width: 40px;
  height: 25px;
  flex: none;
  box-sizing: border-box;
  display: flex;
  align-items: center;
  justify-content: center;
  background: ${({ $active }) => ($active ? '#f7f7f7' : '#d4d4d4')};
  border: 1px solid #8c8c8c;
  border-width: ${({ $active }) => ($active ? '0 1px 0 0' : '1px 1px 1px 0')};
`

const FilterRow = styled.div`
  height: 25px;
  flex: none;
  margin-left: 3px;
  padding-left: 3px;
  display: flex;
  align-items: center;
  box-sizing: border-box;
  border: 1px solid #cfcfcf;
  border-right: none;
`

const TreeList = styled.div`
  flex: none;
  display: flex;
  flex-direction: column;
  padding-top: 1px;
  letter-spacing: -0.1px;
  border-bottom: 1px solid #27318f;
  box-shadow: inset 0 -1px 0 #3d8fc7;
  padding-bottom: 2px;
`

const TreeRow = styled.div`
  height: 22px;
  display: grid;
  grid-template-columns: 20px 28px 1fr;
  align-items: center;
  white-space: nowrap;
  overflow: hidden;
`

const TreeIcon = styled.div`
  display: flex;
  justify-content: flex-end;
  align-items: center;
  padding-right: 3px;
`

const Chevron = styled.span`
  justify-self: center;
  display: block;
  width: 0;
  height: 0;
  border-top: 4px solid transparent;
  border-bottom: 4px solid transparent;
  border-left: 4px solid #6f6f6f;
`

const RootRow = styled.div`
  height: 22px;
  display: flex;
  align-items: center;
  gap: 3px;
  padding-left: 3px;
  white-space: nowrap;
  overflow: hidden;
`

const ScrollBar = styled.div`
  margin-top: auto;
  height: 17px;
  flex: none;
  display: flex;
  align-items: center;
  background: #f1f1f1;
  border-top: 1px solid #b0b0b0;
  box-sizing: border-box;
`

const ScrollArrow = styled.span`
  margin: 0 6px 0 5px;
  display: block;
  width: 0;
  height: 0;
  border-top: 3px solid transparent;
  border-bottom: 3px solid transparent;
  border-right: 4px solid #555;
`

const ScrollThumb = styled.div`
  flex: 1;
  height: 15px;
  display: flex;
  align-items: center;
  justify-content: center;
  background: linear-gradient(#f6f6f6, #cfcfcf);
  border: 1px solid #a0a0a0;
  border-right: none;
  border-radius: 3px 0 0 3px;
  box-sizing: border-box;
  color: #555;
  font-size: 9px;
  line-height: 1;
  letter-spacing: 0;
`

const Viewport = styled.div`
  position: relative;
  flex: 1;
  min-width: 0;
  background: #c2c6d2;
`

const PartDrawing = styled.svg`
  position: absolute;
  inset: 0;
  width: 100%;
  height: 100%;
`

const ViewBar = styled.div`
  position: relative;
  height: 32px;
  display: flex;
  align-items: center;
  padding: 0 6px 0 370px;
`

const ViewCell = styled.div`
  width: 24px;
  flex: none;
  display: flex;
  justify-content: center;
  margin-left: ${({ $ml }) => $ml || 0}px;
`

const ViewCaret = styled.div`
  width: 8px;
  flex: none;
  display: flex;
  justify-content: center;
  margin-left: ${({ $ml }) => $ml || 0}px;
`

const TaskTabs = styled.div`
  position: absolute;
  top: 60px;
  right: 0;
  width: 25px;
  display: flex;
  flex-direction: column;
  border: 1px solid #8a8a8a;
  border-right: none;
  box-sizing: border-box;
`

const TaskTab = styled.div`
  height: 24px;
  display: flex;
  align-items: center;
  justify-content: center;
  box-sizing: border-box;
  background: ${({ $active }) => ($active ? '#fbfbfb' : '#d3d3d3')};
  border-top: ${({ $first }) => ($first ? 'none' : '1px solid #8a8a8a')};
`

const RightDock = styled.aside`
  width: 50px;
  flex: none;
  display: flex;
  flex-direction: column;
  box-sizing: border-box;
  background: #f7f7f7;
  border-bottom: 1px solid #808080;
`

const Chevrons = styled.div`
  margin-top: 18px;
  padding-left: 9px;
`

const DockRule = styled.div`
  margin: auto 0 2px 3px;
  height: 1px;
  background: #a0a0a0;
`

/* bottom */
const TabStrip = styled.div`
  height: 16px;
  flex: none;
  display: flex;
  align-items: stretch;
  background: #f7f7f7;
  border-top: 1px solid #8a8a8a;
  border-bottom: 1px solid #808080;
  box-sizing: border-box;
  padding-left: 82px;
`

const NavButtons = styled.div`
  width: 65px;
  flex: none;
  display: flex;
  background: #a8a8a8;
  border: 1px solid #9a9a9a;
  box-sizing: border-box;
`

const NavButton = styled.div`
  flex: 1;
  display: flex;
  align-items: center;
  justify-content: center;
  border-right: 1px solid #c4c4c4;
  color: #8a8a8a;
  font-size: 9px;
  line-height: 1;
`

const ModelTab = styled.div`
  width: 57px;
  flex: none;
  display: flex;
  align-items: center;
  justify-content: center;
  padding-left: 2px;
  box-sizing: border-box;
  font-weight: 700;
  font-size: 11.5px;
`

const StudyTab = styled.div`
  width: 81px;
  flex: none;
  display: flex;
  align-items: center;
  padding-left: 8px;
  box-sizing: border-box;
  white-space: nowrap;
  overflow: hidden;
  background: #dcdcdc;
  border-left: 1px solid #8a8a8a;
`

const StatusBar = styled.footer`
  height: 19px;
  flex: none;
  display: flex;
  align-items: center;
  padding-left: 1px;
  background: #f7f7f7;
`

const StatusRight = styled.div`
  margin-left: auto;
  display: flex;
  align-items: center;
`

const StatusCell = styled.div`
  width: ${({ $w }) => $w}px;
  flex: none;
`

const TaskBarEdge = styled.div`
  height: 3px;
  flex: none;
  background: #b4d3e8;
  border-top: 1px solid #222;
  box-sizing: border-box;
`

/* menus */
const Menu = styled.div`
  position: absolute;
  left: ${({ $left }) => $left}px;
  top: ${({ $top }) => $top}px;
  width: ${({ $w }) => $w}px;
  box-sizing: border-box;
  background: #f6f6f6;
  border: 1px solid #9a9a9a;
  box-shadow: 3px 3px 4px rgba(0, 0, 0, 0.55);
`

const MenuBand = styled.div`
  height: ${({ $h }) => $h}px;
  display: flex;
  align-items: center;
  padding-left: 18px;
  background: #efefef;
`

const BandArrow = styled.span`
  display: block;
  width: 0;
  height: 0;
  border-left: 5px solid transparent;
  border-right: 5px solid transparent;
  border-bottom: ${({ $up }) => ($up ? '5px solid #a8a8a8' : 'none')};
  border-top: ${({ $up }) => ($up ? 'none' : '5px solid #000')};
`

const MenuList = styled.div`
  display: flex;
  flex-direction: column;
  padding-top: ${({ $pt }) => $pt || 0}px;
`

const MenuRow = styled.div`
  height: 24px;
  box-sizing: border-box;
  margin: ${({ $margin }) => $margin};
  display: grid;
  grid-template-columns: 26px 1fr 20px;
  align-items: center;
  border: 1px solid ${({ $active }) => ($active ? '#8a8a8a' : 'transparent')};
  background: ${({ $active }) => ($active ? '#fff' : 'transparent')};
  color: ${({ $disabled }) => ($disabled ? '#a8a8a8' : '#000')};
  white-space: nowrap;
`

const MenuIcon = styled.div`
  display: flex;
  justify-content: center;
`

const MenuLabel = styled.span`
  padding: 0 0 2px 6px;
`

const MenuEnd = styled.div`
  display: flex;
  justify-content: center;
`

const SubArrow = styled.span`
  display: block;
  width: 0;
  height: 0;
  border-top: 4px solid transparent;
  border-bottom: 4px solid transparent;
  border-left: 4px solid #6a6a6a;
`

const MenuSep = styled.div`
  height: 10px;
  display: flex;
  align-items: center;
  padding: 0 ${({ $right }) => $right || 0}px 0 34px;
  &::before {
    content: '';
    flex: 1;
    height: 1px;
    background: #c6c6c6;
  }
`

const menuTitles = [
  ['File', 34], ['Edit', 36], ['View', 41], ['Insert', 45], ['Tools', 43], ['Window', 60], ['Help', 40],
]

const mainMenu = [
  ['Boss/Base', null, 'sub'],
  ['Cut', null, 'sub'],
  ['Features', null, 'active'],
  ['Pattern/Mirror', null, 'sub'],
  ['Fastening Feature', null, 'sub'],
  ['FeatureWorks', null, 'sub'],
  '-',
  ['Surface', null, 'sub'],
  ['Face', null, 'sub'],
  ['Curve', null, 'sub'],
  ['Reference Geometry', null, 'sub'],
  '-',
  ['Sheet Metal', null, 'sub'],
  ['Weldments', null, 'sub'],
  ['Molds', null, 'sub'],
  '-',
  ['Exploded View...', 'explode'],
  ['Explode Line Sketch', 'explodeLine', 'off'],
  ['Model Break View...', 'breakView'],
  ['Part...', 'part'],
  ['Mirror Part...', null, 'off'],
  '-',
  ['Sketch', 'sketch'],
  ['3D Sketch', 'sketch3d'],
  ['3D Sketch On Plane', 'sketchPlane', 'off'],
  ['Derived Sketch', null, 'off'],
  ['Sketch From Drawing', null, 'off'],
  ['DXF/DWG...'],
  ['Design Study', null, 'sub'],
  '-',
]

const featuresMenu = [
  ['Fillet/Round...', 'fillet'],
  ['Chamfer...', 'chamfer'],
  '-',
  ['Hole Wizard...', 'hole'],
  ['Thread...', 'thread', 'help'],
  '-',
  ['Simple...', 'simple'],
  ['Draft...', 'draft'],
  ['Shell...', 'shell'],
  ['Rib...', 'rib'],
  ['Scale...', 'scale', 'active'],
  ['Dome...', 'dome'],
  ['Freeform...', 'freeform'],
  ['Deform...', 'deform'],
  ['Indent...', 'indent'],
  ['Flex...', 'flex'],
  ['Wrap...', 'wrap'],
  '-',
  ['Cavity...', 'cavity', 'off'],
  ['Join...', 'join', 'off'],
  ['Combine...', 'combine'],
  ['Intersect...', 'intersect'],
  ['Split...', 'split'],
  ['Move/Copy...', 'move'],
  ['Delete/Keep Body...', 'deleteBody'],
  '-',
  ['Imported...', 'imported'],
  ['Save Bodies...'],
  ['Create Assembly...'],
]

const leftTools = [
  ['extrude', 1], ['cut', 1], '-', ['fillet', 1], ['rib'], ['shell'], ['draft'], ['hole', 1],
  '-', ['pattern', 1], '-', ['refGeom', 1], ['curve', 1], '-', ['measure'],
]

const sideTools = [
  ['wire1'], ['wire2'], ['wire3'], ['wire2'], ['wire2'], ['wire1'], ['wire4'],
  '-', ['sketch'], ['sketchFix'], ['rectMove'], '-', ['extrude'], ['cut'],
]

const rightTools = [
  ['sketch', 1], ['smartDim', 1], '-', ['line', 1], ['rect', 1], ['slot', 1], ['circle', 1],
  ['arc', 1], ['spline', 1], ['ellipse', 1], ['sfillet', 1, 'soft'], ['polygon'], ['point'],
  ['construction'], ['textA'], '-', ['trim', 1, 'soft'], ['convert', 1], ['offset'], ['mirror'],
  ['spattern', 1, 'soft'], ['moveEnt', 1, 'soft'], '-', ['displayRel', 1, 'soft'], ['sketchFix'],
  ['plane3', 1, 'soft'],
]

const treeRows = [
  ['History', 'history', true],
  ['Sensors', 'sensors'],
  ['Annotations', 'annotations', true],
  ['Solid Bodies(3)', 'bodies', true],
  ['Material <not specified>', 'material'],
  ['Front Plane', 'plane'],
  ['Top Plane', 'plane'],
  ['Right Plane', 'plane'],
  ['Origin', 'origin'],
  ['Boss-Extrude1', 'extrude', true],
  ['Scale4', 'scale'],
  ['Scale5', 'scale'],
]

const viewTools = [
  ['zoomFit', 0], ['zoomArea', 1], ['zoomPrev', 1], ['section', 3], ['orient', 4], ['^', 2],
  ['display', 4], ['^', 3], ['eye', 5], ['^', 3], ['paint', 5], ['scene', 1], ['^', 4],
  ['monitor', 4], ['^', 4],
]

const viewTabs = [
  ['panelRight', 2], ['minimizeSoft', 0], ['restoreSoft', 4], ['closeSoft', 3],
]

const taskTabs = ['home', 'library', 'folder', 'palette', 'ball', 'tabProps', 'forum']

const RIGHT_ARC = 'M793,240 A226,211 0 0 1 983,541 L965,530 L962,472 L929,455 C922,460 915,466 897,466 C870,466 848,448 832,424 C820,405 815,385 820,368 C825,345 842,329 862,329 C890,329 918,355 932,394 L959,407 L956,348 L793,258 Z'
const TOP_LEFT = 'M680,266 Q735,246 779,241 L780,260 L740,287 L741,337 C758,345 767,362 767,382 C767,415 745,450 707,473 L680,490 Z'
const LOWER = 'M680,580 L705,572 L720,562 C718,530 745,498 797,498 C840,498 870,520 870,547 C870,578 830,597 772,597 L749,611 L803,639 L958,542 L977,553 A226,211 0 0 1 727,648 L680,625 Z'

const wallTicks = [
  [727, 648, 727, 657], [805, 657, 805, 667], [857, 648, 857, 657], [934, 607, 934, 615],
  [835, 282, 835, 291], [946, 343, 946, 352], [853, 447, 853, 456], [895, 466, 895, 475],
  [772, 597, 772, 606], [793, 597, 793, 606], [813, 594, 813, 603], [853, 578, 853, 587],
  [965, 530, 965, 538], [974, 537, 974, 546],
]

function Part() {
  const faces = [TOP_LEFT, RIGHT_ARC, LOWER]
  return (
    <PartDrawing viewBox="285 29 1031 662" stroke="#15171c" strokeWidth="0.9" strokeLinejoin="round">
      {faces.map((d) => (
        <path key={`wall-${d.length}`} d={d} transform="translate(-0.5 9)" fill="#8c90a8" />
      ))}
      {wallTicks.map(([x1, y1, x2, y2]) => (
        <line key={`${x1}-${y1}`} x1={x1} y1={y1} x2={x2} y2={y2} strokeWidth="0.8" />
      ))}
      {faces.map((d) => (
        <path key={`face-${d.length}`} d={d} fill="#666975" />
      ))}
    </PartDrawing>
  )
}

function MenuRows({ rows, margin, sepRight }) {
  return rows.map((row, i) => {
    if (row === '-') return <MenuSep key={i} $right={sepRight} />
    const [label, icon, kind] = row
    const off = kind === 'off'
    return (
      <MenuRow key={label} $margin={margin} $active={kind === 'active'} $disabled={off}>
        <MenuIcon>{icon && <Icon name={icon} size={21} faded={off} />}</MenuIcon>
        <MenuLabel>{label}</MenuLabel>
        <MenuEnd>
          {(kind === 'sub' || (kind === 'active' && !icon)) && <SubArrow />}
          {kind === 'help' && <Icon name="helpStar" size={18} />}
        </MenuEnd>
      </MenuRow>
    )
  })
}

function ToolColumn({ tools, cols, sepMargin, inset }) {
  return (
    <>
      <Grip $inset={inset} />
      {tools.map((tool, i) =>
        tool === '-' ? (
          <DockSep key={i} $m={sepMargin} />
        ) : (
          <DockRow key={i} $cols={cols}>
            <Icon name={tool[0]} size={21} />
            {tool[1] && <Caret $soft={tool[2] === 'soft'} />}
          </DockRow>
        ),
      )}
    </>
  )
}

export default function App() {
  return (
    <Window>
      <GlobalStyle />
      <TopBar>
        <Logo>
          <IconSvg viewBox="0 0 34 24" $size={36} fill="none" stroke="#e0322c" strokeWidth="2.6">
            <path d="M16 2 3 20H12C20 20 22 12 17 8" />
            <path d="M31 3C21 4 18 9 23 12 28 15 26 21 17 22" />
          </IconSvg>
          <LogoBold>SOLID</LogoBold>
          <LogoThin>WORKS</LogoThin>
        </Logo>
        <MenuBar>
          {menuTitles.map(([t, w]) => (
            <MenuTitle key={t} $w={w} $open={t === 'Insert'}>{t}</MenuTitle>
          ))}
          <PinSlot><Icon name="pin" size={16} /></PinSlot>
        </MenuBar>
        <Toolbar>
          <ToolCell><Icon name="newDoc" /><Caret /></ToolCell>
          <ToolCell><Icon name="open" /><Caret /></ToolCell>
          <ToolCell><Icon name="save" /><Caret /></ToolCell>
          <ToolCell><Icon name="print" /><Caret /></ToolCell>
          <ToolCell><Icon name="undo" /><Caret $soft /></ToolCell>
          <SelectedTool><Icon name="cursor" /></SelectedTool>
          <SelectedCaret><Caret /></SelectedCaret>
          <ToolIcon><Icon name="light" /></ToolIcon>
          <ToolIcon><Icon name="listDoc" size={18} /></ToolIcon>
          <ToolIcon $ml={-1}><Icon name="gear" /></ToolIcon>
          <CaretSlot><Caret /></CaretSlot>
          <DocTitle>Part5 *</DocTitle>
          <SearchBox>
            <Icon name="helpCircle" size={18} />
            <SearchText>Search SOLIDWORKS Help</SearchText>
            <SearchEnd><Icon name="search" size={21} /><Caret $soft /></SearchEnd>
          </SearchBox>
          <WinControls>
            <WinButton><Icon name="questionMark" size={18} /></WinButton>
            <WinCaret><Caret /></WinCaret>
            <WinButton><Icon name="minimize" size={18} /></WinButton>
            <WinButton><Icon name="restore" size={18} /></WinButton>
            <WinButton><Icon name="close" size={18} /></WinButton>
          </WinControls>
        </Toolbar>
      </TopBar>

      <Body>
        <Workspace>
          <Main>
            <LeftDock>
              <DockColumn $w={47}>
                <ToolColumn tools={leftTools} cols="30px 12px" sepMargin="0 0 0 2px" />
              </DockColumn>
              <DockColumn $w={33} $lined>
                <ToolColumn tools={sideTools} cols="1fr" sepMargin="0 0 0 4px" inset={4} />
              </DockColumn>
              <FeaturePanel>
                <PanelGrip><GripDot /></PanelGrip>
                <PanelTabs>
                  <PanelTab $active><Icon name="tabTree" /></PanelTab>
                  <PanelTab><Icon name="tabProps" /></PanelTab>
                  <PanelTab><Icon name="tabConfig" /></PanelTab>
                  <PanelTab><Icon name="tabTarget" /></PanelTab>
                  <PanelTab><Icon name="ball" /></PanelTab>
                </PanelTabs>
                <FilterRow><Icon name="funnel" /></FilterRow>
                <TreeList>
                  <RootRow>
                    <Icon name="partNode" />
                    <Icon name="cap" />
                    <span>Part5&nbsp; (Default&lt;&lt;Default&gt;_Dis</span>
                  </RootRow>
                  {treeRows.map(([label, icon, more]) => (
                    <TreeRow key={label}>
                      {more ? <Chevron /> : <span />}
                      <TreeIcon><Icon name={icon} /></TreeIcon>
                      <span>{label}</span>
                    </TreeRow>
                  ))}
                </TreeList>
                <ScrollBar>
                  <ScrollArrow />
                  <ScrollThumb>|||</ScrollThumb>
                </ScrollBar>
              </FeaturePanel>
            </LeftDock>

            <Viewport>
              <Part />
              <ViewBar>
                {viewTools.map(([name, ml], i) =>
                  name === '^' ? (
                    <ViewCaret key={i} $ml={ml}><Caret $soft /></ViewCaret>
                  ) : (
                    <ViewCell key={i} $ml={ml}><Icon name={name} /></ViewCell>
                  ),
                )}
                <ViewCell $ml={202}><Icon name="panelLeft" size={18} /></ViewCell>
                {viewTabs.map(([name, ml]) => (
                  <ViewCell key={name} $ml={ml}><Icon name={name} size={18} /></ViewCell>
                ))}
              </ViewBar>
              <TaskTabs>
                {taskTabs.map((name, i) => (
                  <TaskTab key={name} $active={i === 0} $first={i === 0}><Icon name={name} /></TaskTab>
                ))}
              </TaskTabs>
            </Viewport>
          </Main>

          <TabStrip>
            <NavButtons>
              <NavButton>|◀</NavButton>
              <NavButton>◀</NavButton>
              <NavButton>▶</NavButton>
              <NavButton>▶|</NavButton>
            </NavButtons>
            <ModelTab>Model</ModelTab>
            <StudyTab>Motion Study</StudyTab>
          </TabStrip>
        </Workspace>

        <RightDock>
          <ToolColumn tools={rightTools} cols="38px 6px" sepMargin="0 0 0 3px" inset={3} />
          <Chevrons><Icon name="chevrons" /></Chevrons>
          <DockRule />
        </RightDock>
      </Body>

      <StatusBar>
        Scales the model by a specified factor.
        <StatusRight>
          <StatusCell $w={116}>Editing Part</StatusCell>
          <StatusCell $w={124}>MMGS</StatusCell>
          <StatusCell $w={23}><Icon name="statusGear" size={18} /></StatusCell>
        </StatusRight>
      </StatusBar>
      <TaskBarEdge />

      <Menu $left={285} $top={29} $w={214}>
        <MenuBand $h={19}><BandArrow $up /></MenuBand>
        <MenuList>
          <MenuRows rows={mainMenu} margin="0 0 0 2px" />
        </MenuList>
        <MenuBand $h={19}><BandArrow /></MenuBand>
      </Menu>

      <Menu $left={497} $top={85} $w={208}>
        <MenuList $pt={2}>
          <MenuRows rows={featuresMenu} margin="0 2px 0 1px" sepRight={2} />
        </MenuList>
      </Menu>
    </Window>
  )
}
